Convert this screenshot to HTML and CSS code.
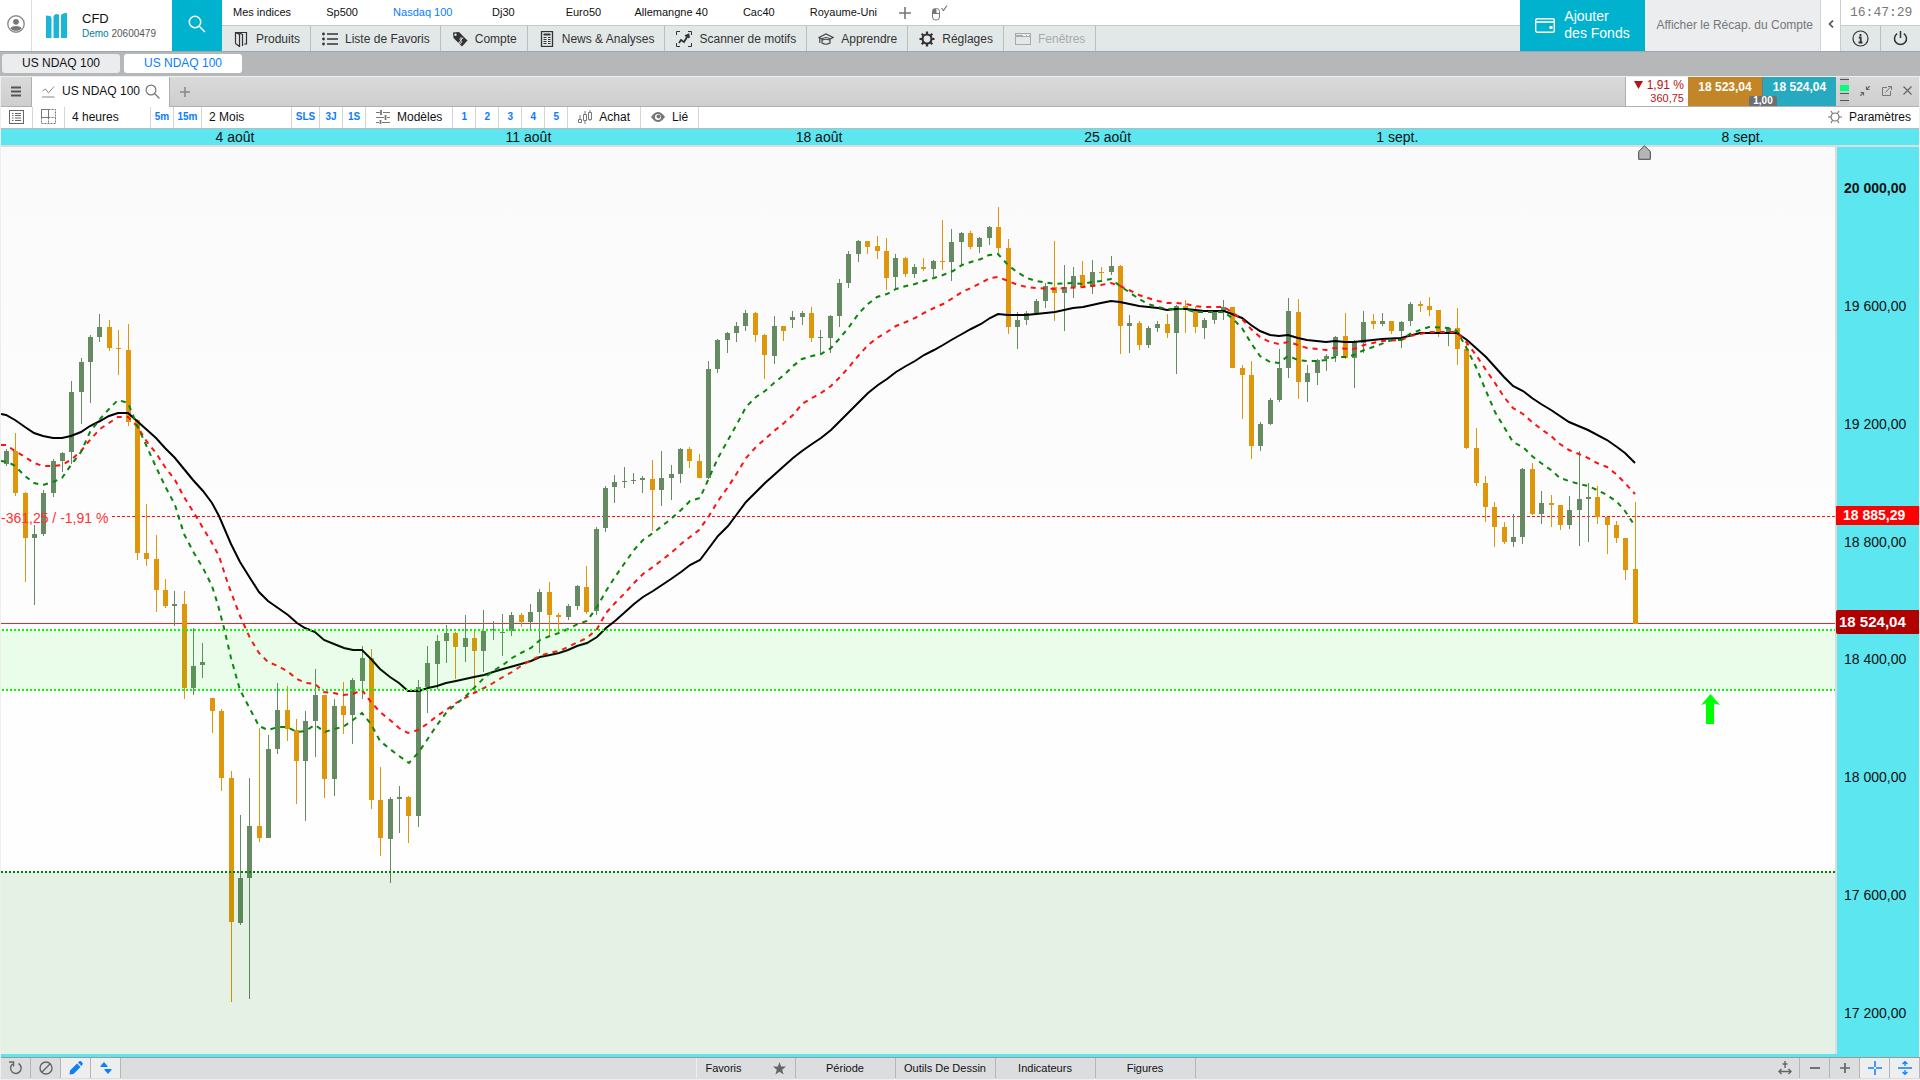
FILE: index.html
```html
<!DOCTYPE html>
<html lang="fr">
<head>
  <meta charset="UTF-8">
  <meta name="viewport" content="width=device-width, initial-scale=1.0">
  <title>US NDAQ 100</title>
  <link rel="stylesheet" href="styles.css">
</head>
<body>
  <header class="header">
    <button class="user-btn" aria-label="Profil">
      <svg width="18" height="18" viewBox="0 0 18 18"><circle cx="9" cy="9" r="8.2" fill="#fff" stroke="#8b8b8b" stroke-width="1.4"/><circle cx="9" cy="6.8" r="2.9" fill="#777"/><path d="M3.5 13.2c1-3 10-3 11 0-1.300 1.800-3.300 2.600-5.500 2.600s-4.200-.8-5.500-2.600z" fill="#777"/></svg>
    </button>
    <div class="account">
      <svg width="21" height="25" viewBox="0 0 21 25" fill="#1bb5d8"><path d="M0 2.500 4 3q1.500.5 1.500 2.500V25H0zM7.500 3.500q.3-2 2.500-2.500l3 .6V25H7.500zM15 2.500q.5-1.800 3-2.200L21 0v25h-6z"/></svg>
      <div class="account-text">
        <strong>CFD</strong>
        <span><em>Demo</em> 20600479</span>
      </div>
    </div>
    <button class="search-btn" aria-label="Rechercher">
      <svg width="20" height="20" viewBox="0 0 20 20" fill="none" stroke="#fff" stroke-width="1.5"><circle cx="8" cy="8" r="5.700"/><path d="M12.200 12.200 18 18"/></svg>
    </button>
    <div class="nav">
      <nav class="nav-top">
        <a href="#">Mes indices</a>
        <a href="#">Sp500</a>
        <a href="#" class="active">Nasdaq 100</a>
        <a href="#">Dj30</a>
        <a href="#">Euro50</a>
        <a href="#">Allemangne 40</a>
        <a href="#">Cac40</a>
        <a href="#">Royaume-Uni</a>
        <button aria-label="Ajouter"><svg width="12" height="12" viewBox="0 0 12 12" stroke="#777" stroke-width="1.600"><path d="M6 0v12M0 6h12"/></svg></button>
        <button aria-label="Souris"><svg width="17" height="16" viewBox="0 0 17 16" fill="none" stroke="#777"><rect x="1.500" y="3.500" width="7" height="11.500" rx="3"/><path d="M2 4.500h3v4H2z" fill="#777"/><path d="M2 8.500h6M10.500 3l2 2.500L16 .5" stroke-width="1.200"/></svg></button>
      </nav>
      <nav class="nav-menu">
        <button><svg width="16" height="16" viewBox="0 0 16 16" fill="none" stroke="#333" stroke-width="1.200"><path d="M2.500 12.500V1.500h11v11.500H11M2.500 1.500l4 2v12l-4-3M5 1.500l4.500 2V15"/></svg>Produits</button>
        <button><svg width="16" height="16" viewBox="0 0 16 16" fill="#333"><circle cx="1.500" cy="3" r="1.400"/><circle cx="1.500" cy="8" r="1.400"/><circle cx="1.500" cy="13" r="1.400"/><path d="M5 2.200h11v1.500H5zM5 7.200h11v1.500H5zM5 12.200h11v1.500H5z"/></svg>Liste de Favoris</button>
        <button><svg width="16" height="16" viewBox="0 0 16 16"><path d="M1 1.500 7 1l8.500 8.500-5.500 6L1.500 7z" fill="#333"/><circle cx="3.500" cy="3.800" r="1.200" fill="#e2e8e7"/><path d="M10.500 7.500q-2-1.500-2.500 0t1 2 0 2.500-2.500 0M11 6.500l-4.500 6" stroke="#e2e8e7" fill="none"/></svg>Compte</button>
        <button><svg width="16" height="16" viewBox="0 0 16 16" fill="none" stroke="#333"><rect x="2.500" y=".5" width="11" height="15" stroke-width="1.300"/><path d="M4.500 3.500h7" stroke-width="2"/><path d="M4.500 6.500h3M4.500 8.500h3M4.500 10.500h3M4.500 12.500h3M9 6.500h2.500M9 8.500h2.500M9 10.500h2.500M9 12.500h2.500"/></svg>News &amp; Analyses</button>
        <button><svg width="16" height="16" viewBox="0 0 16 16" fill="none" stroke="#333"><path d="M.5 4V.5H4M12 .5h3.500V4M.5 12v3.500H4M12 15.500h3.500V12"/><path d="m3 12 2-3 3 2 4-6.500M9 5l3.500-1.500.5 3.500" stroke-width="1.800"/></svg>Scanner de motifs</button>
        <button><svg width="16" height="16" viewBox="0 0 16 16" fill="none" stroke="#444" stroke-width="1.200"><path d="m1 6.500 7-3.500 7 3.500-3 1.500Q8 5 4 8zM4 8v4q4 2.500 8 0V8M1.800 7v5M4.500 9q3.500-1.500 7 0"/></svg>Apprendre</button>
        <button><svg width="16" height="16" viewBox="0 0 16 16" fill="none" stroke="#333"><circle cx="8" cy="8" r="4.500" stroke-width="2.200"/><path d="M8 .5v3M8 12.500v3M.5 8h3M12.500 8h3M2.700 2.700l2 2M11.300 11.300l2 2M2.700 13.300l2-2M11.300 4.700l2-2" stroke-width="2.200"/></svg>Réglages</button>
        <button disabled><svg width="16" height="12" viewBox="0 0 16 12" fill="none" stroke="#aaa"><rect x=".5" y=".5" width="15" height="11"/><path d="M.5 3h15" stroke-width="2"/><path d="M8 2.500h3M12 2.500h2" stroke="#fff"/></svg>Fenêtres</button>
      </nav>
    </div>
    <button class="funds-btn">
      <svg width="20" height="15" viewBox="0 0 20 15" fill="none" stroke="#fff"><rect x=".7" y=".7" width="18.600" height="13.600" rx="1.500" stroke-width="1.400"/><path d="M1 4h18" stroke-width="1.600"/><rect x="15" y="8.500" width="2" height="2" fill="#fff"/></svg>
      <span>Ajouter<br>des Fonds</span>
    </button>
    <button class="recap-btn">Afficher le Récap. du Compte</button>
    <button class="collapse-btn" aria-label="Réduire"><svg width="6" height="8" viewBox="0 0 6 8" fill="none" stroke="#555" stroke-width="1.700"><path d="M5 .7 1.500 4 5 7.300"/></svg></button>
    <div class="status">
      <time class="clock">16:47:29</time>
      <div class="status-btns">
        <button aria-label="Informations"><svg width="17" height="17" viewBox="0 0 17 17" fill="none" stroke="#333"><circle cx="8.500" cy="8.500" r="7.500" stroke-width="1.200"/><path d="M8.500 4v2M6.800 7.500h1.900v5M6.500 12.500h4" stroke-width="1.800"/></svg></button>
        <button aria-label="Déconnexion"><svg width="15" height="15" viewBox="0 0 15 15" fill="none" stroke="#333" stroke-width="1.500"><path d="M4.200 2.600a6 6 0 1 0 6.600 0M7.500 0v7"/></svg></button>
      </div>
    </div>
  </header>

  <div class="layouts">
    <button>US NDAQ 100</button>
    <button class="active">US NDAQ 100</button>
  </div>

  <main class="window">
    <div class="titlebar">
      <button class="burger" aria-label="Menu"><svg width="10" height="11" viewBox="0 0 10 11" stroke="#555" stroke-width="2"><path d="M0 1.500h10M0 5.500h10M0 9.500h10"/></svg></button>
      <div class="doc-tab">
        <svg width="13" height="13" viewBox="0 0 13 13" fill="none" stroke="#888"><path d="m.5 6 3-2 3 4L12 1.500M0 12h12.500"/></svg>
        <span>US NDAQ 100</span>
        <svg width="15" height="15" viewBox="0 0 15 15" fill="none" stroke="#777" stroke-width="1.200"><circle cx="6" cy="6" r="4.900"/><path d="m9.500 9.500 5 5"/></svg>
      </div>
      <button class="add-tab" aria-label="Nouvel onglet"><svg width="10" height="10" viewBox="0 0 10 10" stroke="#888" stroke-width="1.500"><path d="M5 0v10M0 5h10"/></svg></button>
      <div class="quote">
        <div class="change">
          <span class="change-pct"><svg width="9" height="8" viewBox="0 0 9 8"><path d="M0 0h9L4.500 8z" fill="#b81414"/></svg>1,91 %</span>
          <span class="change-pts">360,75</span>
        </div>
        <button class="sell">18 523,04</button>
        <button class="buy">18 524,04</button>
        <span class="spread">1,00</span>
      </div>
      <div class="window-btns">
        <svg width="9" height="28" viewBox="0 0 9 28"><path d="M0 0h9v28H0z" fill="#c8c8c8"/><path d="M0 8h9v6H0z" fill="#00ff7b"/><path d="M0 2.500h9M0 16.500h9M0 23.500h9" stroke="#555"/></svg>
        <button aria-label="Réduire"><svg width="10" height="10" viewBox="0 0 10 10" fill="none" stroke="#666" stroke-width="1.200"><path d="M10 0 6.500 3.500M6.500.5v3h3M0 10l3.500-3.500M.5 6.500h3v3"/></svg></button>
        <button aria-label="Détacher"><svg width="10" height="10" viewBox="0 0 10 10" fill="none" stroke="#777"><path d="M5 1.500H.5v8h8V5M3.500 6.500l5.500-6M6 .5h3.500V4"/></svg></button>
        <button aria-label="Fermer"><svg width="9" height="9" viewBox="0 0 9 9" stroke="#666" stroke-width="1.200"><path d="m.5.5 8 8M8.500.5l-8 8"/></svg></button>
      </div>
    </div>

    <div class="toolbar">
      <button class="tool-icon" aria-label="Liste"><svg width="15" height="14" viewBox="0 0 15 14" fill="none" stroke="#666"><rect x=".5" y=".5" width="14" height="13"/><path d="M3 3.500h1.500M3 5.500h1.500M3 8h1.500M3 10.500h1.500M6 3.500h6M6 5.500h6M6 8h6M6 10.500h6"/></svg></button>
      <button class="tool-icon" aria-label="Grille"><svg width="15" height="15" viewBox="0 0 15 15" fill="none" stroke="#777"><rect x=".5" y=".5" width="7" height="8"/><path d="M7.500.5h7v14H.5v-6M7.500 8.500v6M7.500 8.500h7" stroke-dasharray="2 1"/></svg></button>
      <select class="interval" aria-label="Intervalle"><option>4 heures</option></select>
      <button class="quick">5m</button>
      <button class="quick wide">15m</button>
      <select class="range" aria-label="Période"><option>2 Mois</option></select>
      <button class="quick wide">SLS</button>
      <button class="quick">3J</button>
      <button class="quick">1S</button>
      <button class="tool"><svg width="14" height="14" viewBox="0 0 14 14" fill="none" stroke="#777"><path d="M0 2.500h4M7 2.500h7M0 7.500h8M11 7.500h3M0 12.500h3M6 12.500h8"/><path d="M5 0v5M9.500 5v5M4.500 10v4" stroke-width="1.800"/></svg>Modèles</button>
      <button class="quick">1</button>
      <button class="quick">2</button>
      <button class="quick">3</button>
      <button class="quick">4</button>
      <button class="quick">5</button>
      <button class="tool"><svg width="14" height="14" viewBox="0 0 14 14" fill="none" stroke="#777"><path d="M.5 9.500h3v3h-3zM5.500 4.500h3v6h-3zM10.500 2.500h3v7h-3zM2 5v4M7 1v3M7 11v3M12 0v2M12 9v2"/></svg>Achat</button>
      <button class="tool"><svg width="14" height="10" viewBox="0 0 14 10"><path d="M0 5q7-10 14 0-7 10-14 0z" fill="#777"/><circle cx="7" cy="5" r="3" fill="#fff"/><circle cx="7.500" cy="4.500" r="2" fill="#777"/></svg>Lié</button>
      <button class="tool settings"><svg width="14" height="14" viewBox="0 0 14 14" fill="none" stroke="#777" stroke-width="1.200"><circle cx="7" cy="7" r="4"/><path d="M0 7h3M11 7h3M3 1l1.500 2.500M11 1 9.500 3.500M3 13l1.500-2.500M11 13l-1.500-2.500"/></svg>Paramètres</button>
    </div>

    <div class="dates">
      <span style="left:12.200%">4 août</span>
      <span style="left:27.500%">11 août</span>
      <span style="left:42.650%">18 août</span>
      <span style="left:57.700%">25 août</span>
      <span style="left:72.800%">1 sept.</span>
      <span style="left:90.800%">8 sept.</span>
      <svg class="marker" width="13" height="15" viewBox="0 0 13 15"><path d="M.7 14.300V6.500L6.500.8l5.800 5.700v7.800z" fill="#b5b5b5" stroke="#444"/></svg>
    </div>

    <div class="chart">
      <div class="plot">
        <svg id="plot" viewBox="1 147 1834 907" preserveAspectRatio="none">
          <path d="M1 623.5h1834" stroke="#e8292a"/>
          <path d="M112 516.500h1723" stroke="#f21818" stroke-dasharray="3 2"/>
          <g id="candles" shape-rendering="crispEdges"></g>
          <polyline id="ma-long" fill="none" stroke="#000" stroke-width="2"/>
          <polyline id="ma-mid" class="dashed" stroke="#f11"/>
          <polyline id="ma-short" class="dashed" stroke="#0a840a"/>
          <path d="M1 630h1834v60H1z" fill="#00e000" fill-opacity=".08"/>
          <path d="M1 872h1834v182H1z" fill="#008000" fill-opacity=".1"/>
          <path d="M2 630h1833M2 690h1833" stroke="#0f0" stroke-width="2" stroke-dasharray="2 2"/>
          <path d="M1 872h1834" stroke="#008000" stroke-width="2" stroke-dasharray="2 2"/>
          <path d="m1710.500 694 9.500 11-6-1.500V724h-8v-20.500l-5 1.500z" fill="#0f0"/>
        </svg>
        <span class="plot-label">-361,25 / -1,91 %</span>
      </div>
      <div class="prices">
        <span class="major">20 000,00</span>
        <span>19 600,00</span>
        <span>19 200,00</span>
        <span>18 800,00</span>
        <span>18 400,00</span>
        <span>18 000,00</span>
        <span>17 600,00</span>
        <span>17 200,00</span>
        <b class="badge close">18 885,29</b>
        <b class="badge last">18 524,04</b>
      </div>
    </div>
  </main>

  <footer class="footer">
    <button class="sq" aria-label="Actualiser"><svg width="14" height="14" viewBox="0 0 14 14" fill="none" stroke="#666" stroke-width="1.500"><path d="M9.500 2.500a5.300 5.300 0 1 1-6 .5M0 1h4.500v4.500"/></svg></button>
    <button class="sq" aria-label="Masquer"><svg width="14" height="14" viewBox="0 0 14 14" fill="none" stroke="#666" stroke-width="1.400"><circle cx="7" cy="7" r="6"/><path d="M11.200 2.800 2.800 11.200"/></svg></button>
    <button class="sq on" aria-label="Dessiner"><svg width="14" height="14" viewBox="0 0 14 14" fill="#0a80ff"><path d="m1 9.500 7-7L11.500 6l-7 7L.5 13.500zM9 1.500 10.500.3q1-.5 1.800.3l1.100 1.100q.8.8.1 1.800L12.500 5z"/></svg></button>
    <button class="sq on" aria-label="Ajuster"><svg width="12" height="12" viewBox="0 0 12 12" fill="#0a80ff"><path d="M4 0l3.500 4v1H.5V4zM8 12l3.500-4V7h-7v1z"/></svg></button>
    <div class="footer-tabs">
      <button class="fav">Favoris<svg width="13" height="13" viewBox="0 0 13 13" fill="#666"><path d="m6.500 0 1.600 4.500H13L9.200 7.700l1.400 4.900-4.100-2.900-4.100 2.900 1.400-4.900L0 4.500h4.900z"/></svg></button>
      <button>Période</button>
      <button>Outils De Dessin</button>
      <button>Indicateurs</button>
      <button>Figures</button>
    </div>
    <button class="sq" aria-label="Étirer"><svg width="14" height="14" viewBox="0 0 14 14" fill="none" stroke="#666" stroke-width="1.400"><path d="M7 0v7M4.500 3h5M1 10.500h12M3.500 8 1 10.500 3.500 13M10.500 8l2.500 2.500-2.500 2.500"/></svg></button>
    <button class="sq" aria-label="Zoom arrière"><svg width="10" height="10" viewBox="0 0 10 10" stroke="#666" stroke-width="1.800"><path d="M0 5h10"/></svg></button>
    <button class="sq" aria-label="Zoom avant"><svg width="10" height="10" viewBox="0 0 10 10" stroke="#666" stroke-width="1.700"><path d="M0 5h10M5 0v10"/></svg></button>
    <button class="sq on" aria-label="Réticule"><svg width="14" height="14" viewBox="0 0 14 14" stroke="#0a80ff" stroke-width="1.500"><path d="M0 7h6M8 7h6M7 0v6M7 8v6"/></svg></button>
    <button class="sq on" aria-label="Hauteur"><svg width="14" height="14" viewBox="0 0 14 14" fill="none" stroke="#0a80ff" stroke-width="1.300"><path d="M0 7h14M7 0v5M7 9v5M4.500 3 7 .7 9.500 3M4.500 11 7 13.300 9.500 11"/></svg></button>
  </footer>
  <script src="script.js"></script>
</body>
</html>
```

FILE: styles.css
```css
* {
  box-sizing: border-box;
}
body {
  margin: 0;
  height: 100vh;
  min-height: 600px;
  display: flex;
  flex-direction: column;
  font-family: "Liberation Sans", Arial, sans-serif;
  font-size: 12px;
  color: #111;
  background: #eee;
}
button, select {
  font: inherit;
  color: inherit;
  background: none;
  border: 0;
  padding: 0;
  margin: 0;
  cursor: pointer;
  display: flex;
  align-items: center;
  justify-content: center;
}
a {
  color: inherit;
  text-decoration: none;
}
svg {
  flex: none;
  display: block;
}

/* Header */
.header {
  display: flex;
  height: 52px;
  flex: none;
  background: #fff;
  border-bottom: 1px solid #9aa5b5;
}
.user-btn {
  width: 32px;
  padding-bottom: 3px;
  border-right: 1px solid #ddd;
}
.account {
  width: 140px;
  display: flex;
  align-items: center;
  gap: 15px;
  padding-left: 14px;
}
.account-text {
  display: flex;
  flex-direction: column;
}
.account-text strong {
  font-size: 13px;
  line-height: 16px;
  font-weight: 400;
}
.account-text span {
  font-size: 10px;
  line-height: 14px;
  color: #555;
}
.account-text em {
  font-style: normal;
  color: #007f99;
}
.search-btn {
  width: 50px;
  background: #00b2ce;
}
.search-btn svg {
  margin-bottom: 4px;
}
.nav {
  flex: 1;
  display: flex;
  flex-direction: column;
  min-width: 0;
}
.nav-top {
  display: flex;
  height: 26px;
  border-bottom: 1px solid #c6caca;
  font-size: 11px;
}
.nav-top a {
  min-width: 80px;
  padding: 0 11px;
  line-height: 25px;
  text-align: center;
  white-space: nowrap;
}
.nav-top .active {
  color: #0a7cff;
}
.nav-top button {
  width: 34px;
}
.nav-menu {
  display: flex;
  flex: 1;
  background: #e2e8e7;
  color: #333;
}
.nav-menu button {
  gap: 7px;
  padding: 0 10px 0 11px;
  border-right: 1px solid #b9bebe;
  white-space: nowrap;
}
.nav-menu button:disabled {
  color: #aaa;
}
.funds-btn {
  width: 125px;
  background: #00b2ce;
  color: #fff;
  font-size: 14px;
  line-height: 17px;
  text-align: left;
  gap: 9px;
}
.funds-btn span {
  padding-bottom: 2px;
}
.recap-btn {
  width: 176px;
  padding-bottom: 2px;
  justify-content: flex-end;
  padding-right: 7px;
  background: #ecedef;
  color: #777;
  border-right: 1px solid #d5d5d5;
}
.collapse-btn {
  width: 20px;
  padding-bottom: 4px;
  border-right: 1px solid #ccc;
}
.status {
  width: 79px;
  display: flex;
  flex-direction: column;
}
.clock {
  height: 26px;
  line-height: 26px;
  padding-left: 9px;
  border-bottom: 1px solid #ccc;
  font-family: "Liberation Mono", monospace;
  font-size: 13px;
  color: #777;
}
.status-btns {
  flex: 1;
  display: flex;
  background: #e2e8e7;
}
.status-btns button {
  flex: 1;
}
.status-btns button:first-child {
  border-right: 1px solid #b9bebe;
}

/* Layout tabs */
.layouts {
  display: flex;
  flex: none;
  gap: 4px;
  height: 24px;
  padding: 2px 2px 3px;
  background: #b6b7b9;
}
.layouts button {
  width: 118px;
  padding-bottom: 2px;
  border-radius: 3px;
  background: #ebecee;
}
.layouts .active {
  background: #fff;
  color: #0a7cff;
}

/* Chart window */
.window {
  flex: 1;
  display: flex;
  flex-direction: column;
  min-height: 0;
  margin: 0 1px;
}
.titlebar {
  display: flex;
  flex: none;
  height: 31px;
  border-top: 1px solid #eee;
  border-bottom: 1px solid #b0b0b0;
  background: linear-gradient(#dadada, #cecece);
}
.burger {
  width: 30px;
}
.doc-tab {
  width: 139px;
  height: 30px;
  display: flex;
  align-items: center;
  gap: 7px;
  padding: 0 0 2px 10px;
  background: #fff;
  border-left: 1px solid #b0b0b0;
  border-right: 1px solid #b0b0b0;
}
.doc-tab svg:last-child {
  margin-left: -2px;
}
.add-tab {
  width: 29px;
}
.quote {
  display: flex;
  margin-left: auto;
  position: relative;
}
.change {
  width: 63px;
  display: flex;
  flex-direction: column;
  align-items: flex-end;
  justify-content: center;
  padding-right: 4px;
  background: #fff;
  border-left: 1px solid #b0b0b0;
  color: #b81414;
  line-height: 13px;
}
.change-pct {
  display: flex;
  align-items: center;
  gap: 4px;
}
.change-pts {
  font-size: 11px;
}
.sell, .buy {
  width: 74px;
  padding-bottom: 9px;
  color: #fff;
  font-weight: 700;
  background: #c28628;
}
.buy {
  background: #27a9bf;
  border-left: 1px solid #777;
}
.spread {
  position: absolute;
  right: 59px;
  bottom: 0;
  width: 28px;
  height: 10px;
  line-height: 10px;
  border-radius: 2px 2px 0 0;
  background: #6d6f72;
  color: #fff;
  font-size: 10px;
  font-weight: 700;
  text-align: center;
}
.window-btns {
  width: 83px;
  display: flex;
  align-items: center;
  justify-content: space-between;
  padding: 0 7px 2px 4px;
}

/* Toolbar */
.toolbar {
  display: flex;
  flex: none;
  height: 22px;
  background: #fff;
  border-bottom: 1px solid #c0b8b8;
}
.toolbar > * {
  padding-bottom: 2px;
  border-right: 1px solid #d5d5d5;
}
.tool-icon {
  width: 32px;
}
.toolbar select {
  appearance: none;
  border-radius: 0;
  padding: 0 0 1px 7px;
}
.interval {
  width: 86px;
}
.range {
  width: 90px;
}
.quick {
  width: 23px;
  color: #0a7cff;
  font-size: 10px;
  font-weight: 700;
}
.quick.wide {
  width: 28px;
}
.tool {
  gap: 7px;
  padding: 0 10px 2px;
}
.settings {
  margin-left: auto;
  padding: 0 8px 2px;
  border: 0;
}

/* Time axis */
.dates {
  position: relative;
  flex: none;
  height: 18px;
  background: #5ce6f0;
  border-bottom: 2px solid #dcdcdc;
  font-size: 14px;
  line-height: 16px;
}
.dates span {
  position: absolute;
  transform: translateX(-50%);
}
.marker {
  position: absolute;
  z-index: 1;
  left: 85.350%;
  top: 16px;
}

/* Plot and price axis */
.chart {
  flex: 1;
  display: flex;
  min-height: 0;
  background: #5ce6f0;
}
.plot {
  flex: 1;
  position: relative;
  margin-bottom: 3px;
  border-right: 2px solid #dcdcdc;
  background: linear-gradient(#fafafa, #fefefe 60%);
}
.plot svg {
  position: absolute;
  width: 100%;
  height: 100%;
}
.dashed {
  fill: none;
  stroke-width: 2;
  stroke-dasharray: 5 5;
}
.plot-label {
  position: absolute;
  left: 0;
  top: 40%;
  color: #f33;
  font-size: 14px;
  line-height: 16px;
}
.prices {
  width: 82px;
  position: relative;
  display: flex;
  flex-direction: column;
  justify-content: space-between;
  margin-bottom: 3px;
  padding: 33px 0 33px 7px;
  font-size: 14px;
  line-height: 16px;
}
.major {
  font-weight: 700;
}
.badge {
  position: absolute;
  left: -1px;
  right: 0;
  padding-left: 7px;
  background: #f00;
  color: #fff;
}
.close {
  top: 39.600%;
  line-height: 19px;
}
.last {
  top: 51.050%;
  padding-left: 3px;
  font-size: 15px;
  line-height: 24px;
  background: #b00000;
  border-radius: 2px 0 0 2px;
}

/* Footer */
.footer {
  display: flex;
  flex: none;
  height: 23px;
  margin-left: 1px;
  padding-bottom: 1px;
  border-top: 1px solid #999;
  border-bottom: 1px solid #eee;
  background: #dcdddf;
  font-size: 11px;
}
.sq {
  width: 30px;
  border-right: 1px solid #b5b5b5;
}
.sq.on {
  background: #eee;
}
.footer-tabs {
  display: flex;
  margin: 0 auto;
}
.footer-tabs button {
  width: 100px;
  border-right: 1px solid #b5b5b5;
}
.footer-tabs .fav {
  justify-content: space-between;
  padding: 0 9px;
  border-left: 1px solid #eee;
}
```

FILE: script.js
```js
// One entry per candle: direction (g up, o down) then high, body top, body bottom, low
const candles = `
g449,451,464,466 o433,451,493,496 o492,493,538,582 g525,534,538,605 g490,493,534,536
g459,461,493,497 g452,453,461,472 g381,392,452,464 g358,362,392,424 g335,337,362,403
g314,327,337,342 o320,327,348,351 o330,348,349,375 o324,350,422,426 o419,420,553,560
o504,553,559,566 o535,559,590,612 o579,590,606,608 g591,604,606,626 o591,604,688,699
g628,666,688,695 g643,662,665,678 o698,698,711,733 o709,711,778,791 o771,778,922,1002
g815,878,923,925 g778,826,878,999 o728,826,838,842 g735,749,838,838 g683,710,749,754
o686,710,729,741 o719,730,761,804 g711,721,761,821 g669,695,721,757 o695,695,779,798
g699,706,779,796 o682,706,715,734 g678,680,715,744 g646,658,681,699 o649,658,800,809
o767,800,838,856 g797,799,839,883 g786,797,799,833 o796,797,816,843 g680,687,816,827
g646,663,687,713 g635,641,664,689 g625,633,641,663 o632,633,647,679 g615,638,647,662
o631,638,651,693 g610,631,651,672 g621,629,630,640 g614,632,633,656 g612,615,631,636
o613,615,622,627 g604,612,622,629 g589,592,612,653 o582,592,615,636 o613,615,617,634
g604,606,617,620 g585,586,606,610 o566,587,612,614 g527,529,611,615 g486,488,528,532
g475,482,487,503 g467,481,482,488 g473,480,481,484 g476,478,480,493 o460,479,490,531
g451,478,490,506 g465,474,478,500 g448,449,474,483 o447,449,461,468 o454,461,478,478
g361,369,478,479 g339,340,369,373 g332,333,340,353 g322,326,333,342 g310,313,326,331
o312,313,335,342 o334,335,355,379 g316,326,356,364 o326,326,331,341 g311,317,320,328
g311,313,317,325 o307,313,338,342 g330,337,338,353 g315,316,338,353 g279,283,316,327
g251,254,283,288 g240,241,254,262 o241,241,247,254 o236,246,251,259 o238,251,278,290
g254,258,277,289 o257,258,274,277 g264,267,274,278 o258,267,269,271 g260,261,269,277
o220,261,262,270 g229,242,262,281 g232,233,242,265 o231,233,247,249 g237,238,247,253
g226,227,238,245 o207,227,248,254 o239,248,327,334 g312,320,327,349 g311,313,320,325
g299,301,313,314 g283,286,301,308 o241,287,293,321 g265,287,293,331 g267,276,287,298
o261,275,287,288 g260,272,287,294 o267,272,273,282 g256,266,272,275 o265,266,326,354
g315,323,326,353 o321,323,345,350 g326,328,345,348 g321,324,328,332 o314,324,333,338
g305,306,333,374 o300,306,308,333 o306,310,327,333 g318,320,328,339 g311,312,320,324
g300,307,311,320 o307,307,368,368 o365,368,375,419 o361,375,446,459 g422,424,446,451
g398,400,424,425 g349,368,400,402 g298,311,368,378 o299,312,382,399 g365,373,382,402
g359,360,373,385 g354,356,359,371 g336,337,356,362 o313,336,358,359 g340,342,358,388
g311,322,343,353 o314,321,324,329 g313,321,324,326 o321,321,331,334 g321,322,331,348
g302,304,321,326 o301,304,306,312 o297,306,310,316 o310,310,332,337 g327,328,333,346
o308,328,349,365 o344,349,448,449 o428,448,483,486 o476,483,507,522 o502,507,527,547
o522,527,542,544 g514,537,542,547 g468,469,537,544 o463,469,514,515 g491,503,514,524
o495,503,505,527 o505,505,525,530 g496,510,525,529 g451,499,510,546 g483,497,499,542
o486,497,517,524 o517,517,525,554 o521,525,538,543 o538,538,570,580 o502,569,624,624`;

const maLong = '1,414 6,415 15,420 25,427 34,433 43,436 53,438 62,438 71,436 81,432 90,426 100,421 109,416 118,413 128,413 137,421 156,438 165,448 175,458 184,469 193,480 203,491 212,503 219,516 231,544 240,562 250,578 259,592 268,601 278,608 288,615 297,623 305,628 315,632 324,640 334,644 344,648 353,650 362,650 371,659 380,669 390,677 399,683 408,691 419,691 428,688 437,686 446,683 456,681 465,679 474,677 484,675 493,672 503,669 521,664 531,661 540,657 550,655 559,653 568,650 577,646 587,643 597,637 606,628 615,621 624,613 634,604 643,597 653,591 662,585 671,579 681,572 690,565 700,560 709,548 718,536 728,526 737,514 746,502 756,492 765,483 774,475 784,466 793,458 802,451 812,444 821,438 831,430 840,421 850,411 860,401 868,393 878,385 887,379 896,372 906,366 915,361 924,355 934,350 943,345 953,339 962,334 971,329 981,324 990,318 998,314 1008,315 1026,315 1036,314 1055,312 1073,308 1083,307 1101,303 1111,301 1120,302 1139,306 1158,308 1167,310 1176,309 1186,309 1204,311 1224,311 1232,314 1242,318 1251,325 1260,331 1270,335 1279,336 1288,335 1298,338 1307,340 1326,342 1335,341 1345,342 1354,342 1382,339 1401,338 1420,333 1429,333 1457,333 1467,340 1476,348 1486,357 1495,367 1504,377 1513,386 1523,391 1532,398 1541,404 1551,410 1569,422 1588,430 1607,440 1617,447 1625,453 1635,463';
const maMid = '1,445 6,445 15,451 25,457 34,463 43,466 53,466 62,465 72,459 81,451 90,440 100,429 109,423 118,417 128,417 137,426 147,442 156,453 165,467 175,480 184,497 194,513 203,528 212,543 219,556 228,584 240,616 250,638 259,653 268,662 278,666 287,671 297,679 306,683 315,684 324,692 334,693 343,695 353,694 362,690 371,702 380,712 390,720 399,728 408,733 418,730 427,724 437,716 446,710 456,703 465,698 474,693 484,688 493,683 503,677 512,672 521,666 531,660 540,656 549,653 559,651 568,647 578,642 587,638 597,629 606,613 615,603 624,594 634,583 643,574 653,567 662,560 671,553 681,544 690,537 699,530 709,516 718,501 728,487 737,473 746,458 756,447 765,439 774,431 784,423 793,415 802,404 812,398 821,393 831,386 840,377 849,367 859,355 868,345 877,338 887,332 896,326 906,322 915,318 924,313 934,308 943,304 953,298 962,292 971,288 981,283 990,278 998,277 1008,281 1018,285 1027,287 1036,288 1055,289 1064,288 1083,287 1101,285 1111,283 1120,286 1129,290 1139,295 1148,298 1158,301 1167,303 1176,303 1186,304 1195,306 1204,307 1224,307 1233,313 1242,319 1251,329 1260,337 1270,342 1279,344 1288,342 1298,345 1307,348 1326,350 1335,348 1354,349 1364,345 1373,343 1382,341 1401,340 1410,336 1420,334 1429,332 1457,332 1467,343 1476,355 1486,370 1495,383 1504,397 1513,408 1523,414 1532,422 1541,429 1551,436 1560,444 1569,450 1579,454 1588,458 1597,463 1607,467 1616,474 1625,483 1635,494';
const maShort = '1,461 8,462 15,466 25,476 34,483 43,485 53,482 62,478 71,465 81,452 90,432 100,419 109,409 118,400 128,403 137,425 147,447 156,467 165,486 175,505 184,534 194,553 203,568 212,586 218,605 224,628 231,658 240,690 250,709 259,726 268,730 278,727 287,727 297,732 305,731 315,725 325,732 334,729 343,727 353,720 362,713 371,724 380,741 390,749 399,756 409,763 418,753 427,740 437,725 446,713 456,704 465,697 475,687 484,678 493,671 503,665 512,658 521,653 531,648 540,640 550,636 559,633 568,629 578,624 587,621 597,607 606,591 615,577 624,564 634,550 643,540 653,533 662,526 671,519 681,510 690,501 700,498 709,478 718,458 728,440 737,424 746,407 756,397 765,391 774,383 784,375 793,366 802,359 812,356 821,354 831,348 840,338 849,327 859,313 868,304 877,297 887,294 896,289 906,286 915,284 924,281 934,278 943,275 953,271 962,265 971,262 981,259 989,255 998,254 1008,265 1017,272 1027,278 1036,281 1055,284 1073,283 1083,284 1092,282 1101,281 1111,279 1120,286 1129,292 1139,299 1148,304 1158,307 1167,309 1185,309 1195,312 1204,312 1224,312 1233,319 1242,328 1251,343 1260,356 1270,362 1279,363 1288,356 1298,360 1307,361 1316,361 1326,360 1335,357 1345,357 1354,355 1364,350 1373,347 1392,340 1401,340 1410,334 1420,330 1429,327 1448,328 1457,331 1467,349 1476,367 1486,391 1495,412 1504,427 1513,442 1523,447 1532,456 1541,463 1551,470 1560,478 1569,481 1579,484 1588,486 1597,490 1607,495 1617,502 1625,511 1633,523';

const colors = { g: '#668a62', o: '#e0960a' };
const step = 9.362;

document.getElementById('candles').innerHTML = candles.trim().split(/\s+/).map((c, i) => {
  const x = Math.floor(6.35 + i * step);
  const [high, top, bottom, low] = c.slice(1).split(',').map(Number);
  return `<path fill="${colors[c[0]]}" d="M${x} ${high}h1V${low}h-1zM${x - 2} ${top}h5V${bottom}h-5z"/>`;
}).join('');

document.getElementById('ma-long').setAttribute('points', maLong);
document.getElementById('ma-mid').setAttribute('points', maMid);
document.getElementById('ma-short').setAttribute('points', maShort);
```
